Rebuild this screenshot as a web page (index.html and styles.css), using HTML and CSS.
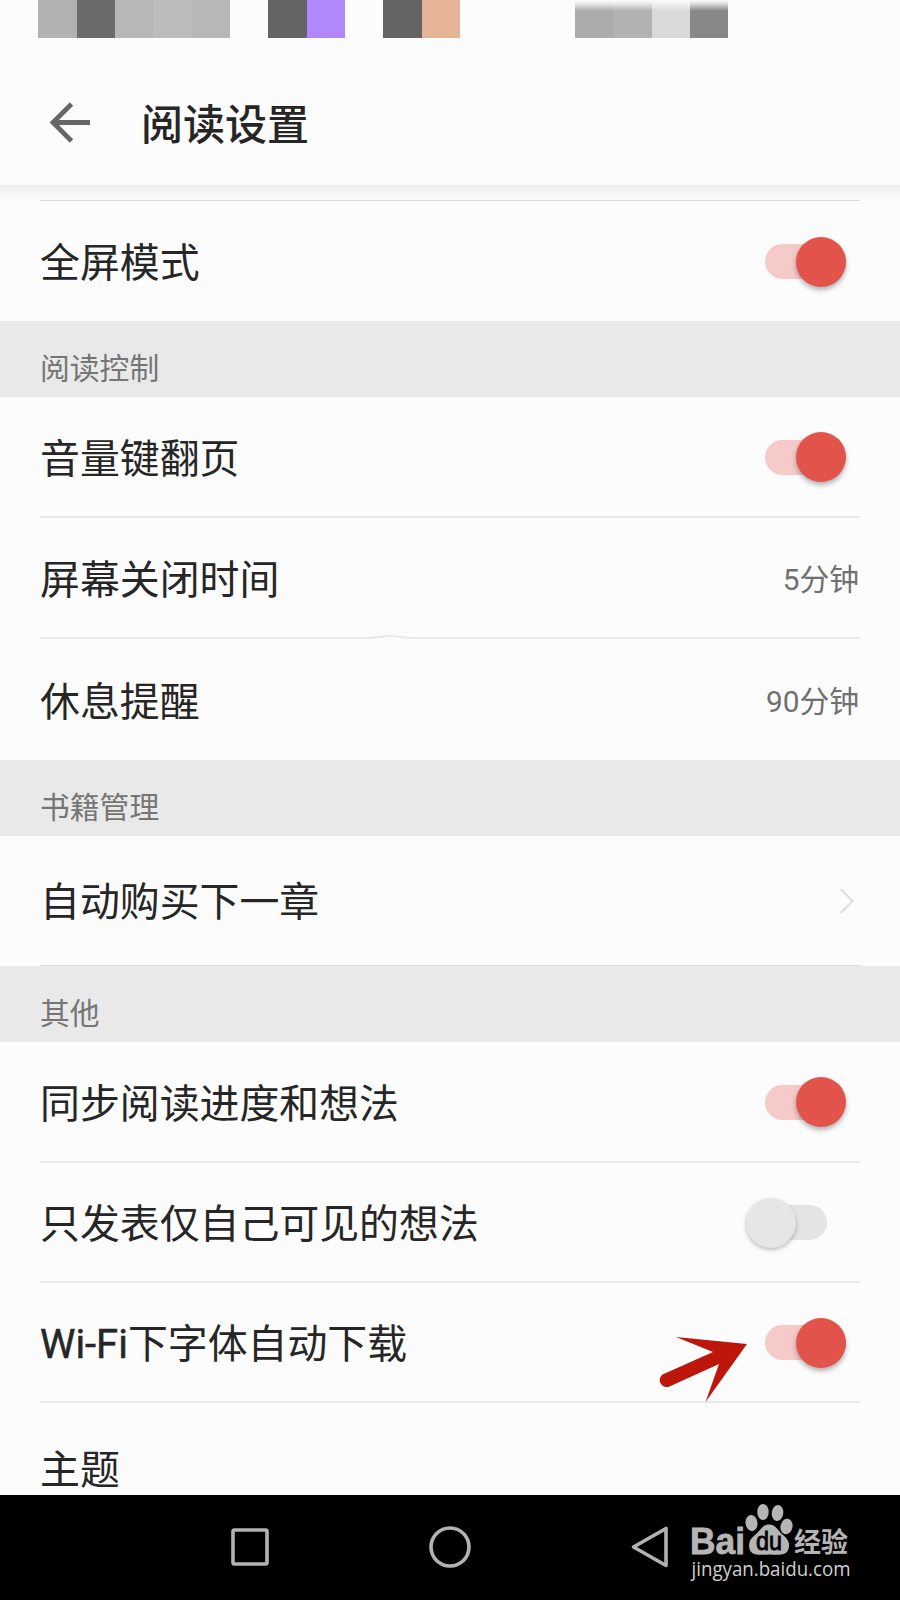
FILE: index.html
```html
<!DOCTYPE html>
<html lang="zh-CN">
<head>
  <meta charset="UTF-8">
  <meta name="viewport" content="width=device-width, initial-scale=1.0">
  <title>阅读设置</title>
  <link rel="stylesheet" href="styles.css">
</head>
<body>
  <div class="screen">
    <div class="status-bar">
      <div class="block gray1"></div>
      <div class="block dark1"></div>
      <div class="block gray2"></div>
      <div class="block gray3"></div>
      <div class="block gray2"></div>
      <div class="block"></div>
      <div class="block dark2"></div>
      <div class="block purple"></div>
      <div class="block"></div>
      <div class="block dark2"></div>
      <div class="block orange"></div>
      <div class="block"></div>
      <div class="block"></div>
      <div class="block"></div>
      <div class="block fade gray4"></div>
      <div class="block fade gray1"></div>
      <div class="block fade light"></div>
      <div class="block fade dark3"></div>
    </div>
    <header class="header">
      <svg class="back" width="42" height="42" viewBox="0 0 42 42">
        <path d="M41 20.5H5M22.5 2L4 20.5L22.5 39" fill="none" stroke="#666" stroke-width="4.8"/>
      </svg>
      <h1>阅读设置</h1>
    </header>

    <main class="settings">
      <div class="top-line"></div>
      <div class="row row-full">
        <span class="label">全屏模式</span>
        <span class="switch on"><i class="knob"></i></span>
      </div>

      <div class="section">阅读控制</div>
      <div class="row">
        <span class="label">音量键翻页</span>
        <span class="switch on"><i class="knob"></i></span>
      </div>
      <div class="row">
        <span class="label">屏幕关闭时间</span>
        <span class="value">5分钟</span>
        <svg class="bump" width="44" height="7" viewBox="0 0 44 7">
          <path d="M0 3H44V7H0Z" fill="#fcfcfc"/>
          <path d="M0 5C10 5 14 3 22 3S34 5 44 5" fill="none" stroke="#e8e8e8" stroke-width="1.8"/>
        </svg>
      </div>
      <div class="row row-rest">
        <span class="label">休息提醒</span>
        <span class="value">90分钟</span>
      </div>

      <div class="section">书籍管理</div>
      <div class="row row-buy">
        <span class="label">自动购买下一章</span>
        <svg class="chevron" width="16" height="28" viewBox="0 0 16 28">
          <path d="M1.5 2L13.5 14L1.5 26" fill="none" stroke="#dedede" stroke-width="2"/>
        </svg>
      </div>

      <div class="section">其他</div>
      <div class="row">
        <span class="label">同步阅读进度和想法</span>
        <span class="switch on"><i class="knob"></i></span>
      </div>
      <div class="row row-short">
        <span class="label">只发表仅自己可见的想法</span>
        <span class="switch off"><i class="knob"></i></span>
      </div>
      <div class="row row-short">
        <span class="label"><span class="latin">Wi-Fi</span>下字体自动下载</span>
        <span class="switch on"><i class="knob"></i></span>
        <svg class="pointer" width="90" height="68" viewBox="0 0 90 68">
          <path d="M17 1L88 8L46.5 66L60 28L10.500 50.500A7 7 0 0 1 3.500 38.500L54 16Z" fill="#bd170b"/>
        </svg>
      </div>
      <div class="row row-theme">
        <span class="label">主题</span>
      </div>
    </main>

    <nav class="navbar">
      <svg class="nav-square" width="38" height="38" viewBox="0 0 38 38">
        <rect x="2" y="2" width="34" height="34" rx="1.5"/>
      </svg>
      <svg class="nav-circle" width="42" height="42" viewBox="0 0 42 42">
        <circle cx="21" cy="21" r="19"/>
      </svg>
      <svg class="nav-back" width="38" height="44" viewBox="0 0 38 44">
        <path d="M2.5 22L35 3.5V40.5Z"/>
      </svg>
    </nav>

    <div class="watermark">
      <svg width="180" height="90" viewBox="0 0 180 90">
        <text class="bai" x="10" y="53.5" textLength="55" lengthAdjust="spacingAndGlyphs">Bai</text>
        <ellipse cx="71.5" cy="23" rx="6" ry="8" transform="rotate(-8 71.5 23)"/>
        <ellipse cx="83" cy="12" rx="5.7" ry="8"/>
        <ellipse cx="97.5" cy="13" rx="5.8" ry="8" transform="rotate(8 97.5 13)"/>
        <ellipse cx="106.5" cy="26.5" rx="6" ry="7.8" transform="rotate(12 106.5 26.5)"/>
        <path d="M89 24.5C96 24.5 98 31 103 35C109 40 110 44 108.5 49C106 56 99 55 89 54.5C79 55 72 56 69.5 49C68 43 70 39 75 35C80 31 82 24.5 89 24.5Z"/>
        <text class="du" x="76" y="49.5" textLength="26" lengthAdjust="spacingAndGlyphs">du</text>
        <text class="jy" x="114" y="51.5" textLength="54" lengthAdjust="spacingAndGlyphs">经验</text>
        <text class="url" x="11.5" y="75.500" textLength="159" lengthAdjust="spacingAndGlyphs">jingyan.baidu.com</text>
      </svg>
    </div>
  </div>
</body>
</html>
```

FILE: styles.css
```css
* {
  box-sizing: border-box;
}
body {
  margin: 0;
  background-color: #fcfcfc;
  font-family: Roboto, "Noto Sans CJK SC", sans-serif;
  color: #262626;
}
svg {
  display: block;
}
.screen {
  position: relative;
  width: 900px;
  height: 1600px;
  overflow: hidden;
  display: flex;
  flex-direction: column;
}

/* status bar */
.status-bar {
  display: grid;
  grid-template-columns: repeat(18, 38.34px);
  height: 38px;
  padding-left: 38.3px;
}
.gray1 { background-color: #b2b2b2; }
.gray2 { background-color: #b7b7b7; }
.gray3 { background-color: #bcbcbc; }
.gray4 { background-color: #acacac; }
.dark1 { background-color: #6b6b6b; }
.dark2 { background-color: #646464; }
.dark3 { background-color: #888; }
.light { background-color: #d9d9d9; }
.purple { background-color: #b088fb; }
.orange { background-color: #e5b497; }
.fade {
  background-image: linear-gradient(#fcfcfc 0, rgba(252, 252, 252, 0.8) 3px, rgba(252, 252, 252, 0) 11px);
}

/* header */
.header {
  display: flex;
  align-items: center;
  height: 147px;
  padding: 23px 0 0 49px;
}
.header h1 {
  margin: 0 0 0 50px;
  padding-top: 6px;
  font-size: 42px;
  font-weight: 500;
  line-height: 60px;
}

/* settings list */
.settings {
  height: 1310px;
  overflow: hidden;
  background: linear-gradient(#eeeeee, #fcfcfc 15px);
}
.top-line {
  height: 16px;
  margin: 0 40px;
  border-bottom: 1px solid #dcdcdc;
}
.row {
  position: relative;
  display: flex;
  align-items: center;
  justify-content: space-between;
  height: 121px;
  margin: 0 40px;
  padding-top: 1px;
  border-bottom: 2px solid #e8e8e8;
}
.row-full {
  height: 120px;
  border-bottom: none;
}
.row-rest {
  height: 121px;
  border-bottom: none;
}
.row-buy {
  height: 130px;
  padding-top: 0;
  border-bottom: 1px solid #dcdcdc;
}
.row-short {
  height: 120px;
}
.row-theme {
  height: 130px;
  border-bottom: none;
}
.section {
  height: 76px;
  padding: 19px 40px 0;
  background-color: #e9e9e9;
  color: #757575;
  font-size: 29.8px;
  line-height: 58px;
}
.label {
  padding-top: 5px;
  font-size: 39.9px;
  line-height: 60px;
}
.latin {
  -webkit-text-stroke: 0.5px #262626;
}
.value {
  padding: 3px 1px 0 0;
  color: #707070;
  font-size: 29.8px;
  line-height: 44px;
}
.chevron {
  margin-right: 5px;
}
.bump {
  position: absolute;
  left: 328px;
  bottom: -3px;
}

/* switches */
.switch {
  display: flex;
  align-items: center;
  width: 81px;
  height: 35px;
  border-radius: 18px;
}
.knob {
  width: 50px;
  height: 50px;
  border-radius: 50%;
  box-shadow: 0 3px 5px rgba(0, 0, 0, 0.3);
}
.on {
  justify-content: flex-end;
  margin-right: 14px;
  background-color: #f5cac8;
}
.on .knob {
  background-color: #e2534b;
}
.off {
  margin-right: 33px;
  background-color: #e4e4e4;
}
.off .knob {
  background-color: #e6e6e6;
  box-shadow: 0 2px 4px rgba(0, 0, 0, 0.25);
}

/* red arrow next to the Wi-Fi switch */
.pointer {
  position: absolute;
  left: 619px;
  top: 53px;
}

/* android nav bar */
.navbar {
  display: flex;
  align-items: center;
  height: 105px;
  padding: 0 0 1px 231px;
  background-color: #000;
}
.navbar svg {
  fill: none;
  stroke: #b2b2b2;
  stroke-width: 3.6;
  stroke-linejoin: round;
}
.nav-circle {
  margin-left: 160px;
}
.nav-back {
  margin-left: 160px;
}

/* watermark */
.watermark {
  position: absolute;
  left: 680px;
  top: 1500px;
}
.watermark svg {
  fill: #b5b5b5;
}
.bai {
  font-family: "Liberation Sans", sans-serif;
  font-weight: bold;
  font-size: 36px;
  stroke: #b5b5b5;
  stroke-width: 0.8;
}
.du {
  fill: #000;
  font-family: "Liberation Sans", sans-serif;
  font-size: 25px;
  stroke: #000;
  stroke-width: 0.8;
}
.jy {
  font-family: "Noto Sans CJK SC", sans-serif;
  font-size: 27px;
  font-weight: bold;
}
.url {
  font-family: "Open Sans", "Noto Sans", sans-serif;
  font-size: 20px;
  fill: #cfcfcf;
}
```
